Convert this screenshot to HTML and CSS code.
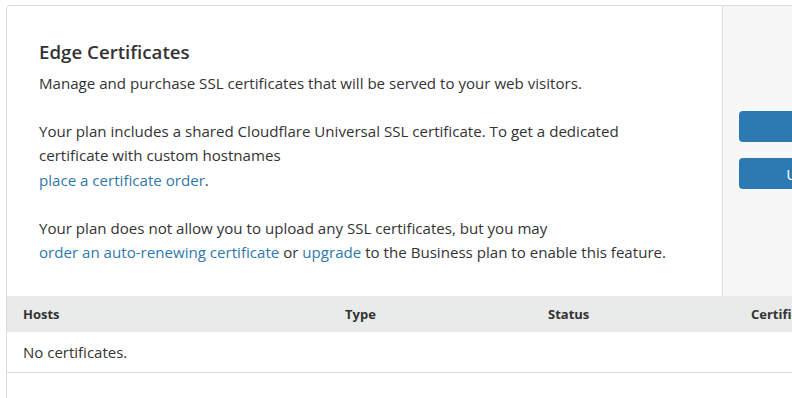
FILE: index.html
```html
<!DOCTYPE html>
<html>
<head>
<meta charset="utf-8">
<link rel="stylesheet" href="styles.css">
</head>
<body>
<div class="card">
  <div class="top">
    <div class="main">
      <h2 class="title">Edge Certificates</h2>
      <p>Manage and purchase SSL certificates that will be served to your web visitors.</p>
      <p>Your plan includes a shared Cloudflare Universal SSL certificate. To get a dedicated<br>certificate with custom hostnames<br><a href="#">place a certificate order</a>.</p>
      <p>Your plan does not allow you to upload any SSL certificates, but you may<br><a href="#">order an auto-renewing certificate</a> or <a href="#">upgrade</a> to the Business plan to enable this feature.</p>
    </div>
    <div class="side">
      <button class="btn">Order SSL Certificate</button>
      <button class="btn">Upload Custom SSL Certificate</button>
    </div>
  </div>
  <table class="tbl">
    <thead>
      <tr><th class="c-host">Hosts</th><th class="c-type">Type</th><th class="c-status">Status</th><th>Certificates</th></tr>
    </thead>
    <tbody>
      <tr><td colspan="4">No certificates.</td></tr>
    </tbody>
  </table>
</div>
</body>
</html>
```
FILE: styles.css
```css
html, body { margin: 0; padding: 0; }
body {
  background: #fff;
  font-family: "Open Sans", "Noto Sans", sans-serif;
  color: #333;
  overflow: hidden;
  width: 792px;
  height: 398px;
}
.card {
  margin: 5px 0 0 6px;
  width: 1100px;
  height: 420px;
  border: 1px solid #dcdcdc;
  border-radius: 4px;
  background: #fff;
}
.top { display: flex; }
.main {
  width: 715px;
  flex: none;
  box-sizing: border-box;
  padding: 33px 32px 32px 32px;
  font-size: 15.1px;
  line-height: 24.2px;
}
.title {
  margin: 0 0 6px 0;
  font-size: 18.7px;
  font-weight: 600;
  line-height: 26px;
}
.main p { margin: 0 0 24px 0; }
.main p:last-child { margin-bottom: 0; }
a { color: #2f78ac; text-decoration: none; }
.side {
  flex: 1;
  background: #f7f7f7;
  border-left: 1px solid #dcdcdc;
  padding: 105px 16px 0 16px;
  display: flex;
  flex-direction: column;
  align-items: flex-start;
  gap: 16px;
}
.btn {
  width: 306px;
  height: 31px;
  border: 0;
  border-radius: 4px;
  background: #2d7ab3;
  color: #fff;
  font-family: inherit;
  font-size: 15px;
}
.tbl {
  border-collapse: collapse;
  width: 100%;
  font-size: 13px;
}
.tbl th {
  background: #e9eaea;
  text-align: left;
  font-weight: 700;
  height: 36px;
  padding: 0 16px;
  color: #333;
}
.c-host { width: 290px; }
.c-type { width: 171px; }
.c-status { width: 171px; }
.tbl td {
  height: 40px;
  padding: 0 16px;
  font-size: 15px;
  border-bottom: 1px solid #dcdcdc;
}
```
